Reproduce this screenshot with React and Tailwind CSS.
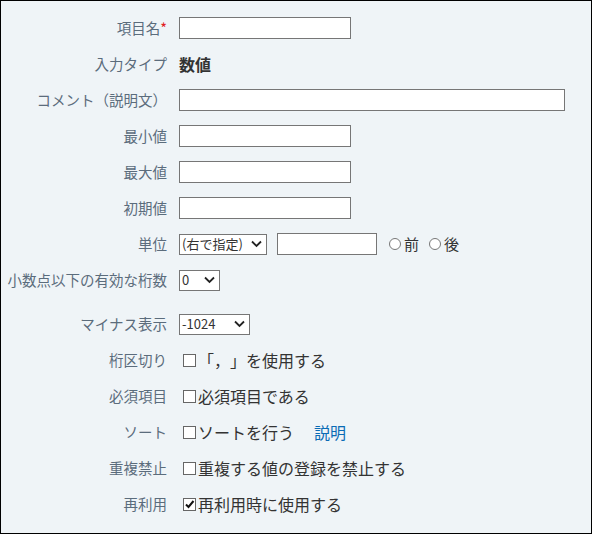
import React from 'react';

const font = { fontFamily: '"Noto Sans CJK JP", "Noto Sans", sans-serif' };

const Row = ({ label, required, className = '', children }) => (
    <div className={`flex h-9 items-center ${className}`}>
        <div className="w-[166px] shrink-0 text-right text-[14.5px] text-[#5b6c7c] whitespace-nowrap">
            {label}
            {required && <span className="text-[#e02020]">*</span>}
        </div>
        <div className="ml-3 flex items-center text-[16px] text-[#333]">{children}</div>
    </div>
);

const TextBox = ({ className = 'w-[172px]' }) => (
    <div className={`h-[22px] border border-[#767676] bg-white ${className}`} />
);

const Select = ({ value, className = '' }) => (
    <div className={`flex h-[21px] items-center justify-between border border-[#767676] bg-white pl-[2px] pr-[4px] text-[13px] text-[#333] ${className}`}>
        <span>{value}</span>
        <svg width="11" height="8" viewBox="0 0 11 8" className="shrink-0">
            <path d="M1 1.5 L5.5 6 L10 1.5" fill="none" stroke="#222" strokeWidth="1.8" />
        </svg>
    </div>
);

const Check = ({ checked }) => (
    <span className="ml-1 mr-[2px] inline-flex h-[13px] w-[13px] items-center justify-center border border-[#666] bg-white">
        {checked && (
            <svg width="11" height="11" viewBox="0 0 11 11">
                <path d="M2 5.5 L4.5 8 L9.5 2" fill="none" stroke="#111" strokeWidth="2" />
            </svg>
        )}
    </span>
);

const Radio = ({ label }) => (
    <span className="flex items-center">
        <span className="mr-[3px] inline-block h-[12px] w-[12px] rounded-full border border-[#777] bg-white" />
        {label}
    </span>
);

export default function App() {
    return (
        <div style={font} className="h-[534px] w-[592px] border border-black bg-[#eff4f7] pt-[9px] [text-spacing-trim:space-all]">
            <Row label="項目名" required>
                <TextBox />
            </Row>
            <Row label="入力タイプ">
                <span className="font-bold">数値</span>
            </Row>
            <Row label="コメント（説明文）">
                <TextBox className="w-[386px]" />
            </Row>
            <Row label="最小値">
                <TextBox />
            </Row>
            <Row label="最大値">
                <TextBox />
            </Row>
            <Row label="初期値">
                <TextBox />
            </Row>
            <Row label="単位">
                <Select value="(右で指定)" className="w-[88px]" />
                <TextBox className="ml-[10px] w-[100px]" />
                <div className="ml-3 flex items-center gap-[10px] text-[15px]">
                    <Radio label="前" />
                    <Radio label="後" />
                </div>
            </Row>
            <Row label="小数点以下の有効な桁数">
                <Select value="0" className="w-[41px]" />
            </Row>
            <Row label="マイナス表示" className="mt-2">
                <Select value="-1024" className="w-[71px]" />
            </Row>
            <Row label="桁区切り">
                <Check />
                <span>「，」を使用する</span>
            </Row>
            <Row label="必須項目">
                <Check />
                <span>必須項目である</span>
            </Row>
            <Row label="ソート">
                <Check />
                <span>ソートを行う</span>
                <a className="ml-[20px] text-[#0a6bb5]">説明</a>
            </Row>
            <Row label="重複禁止">
                <Check />
                <span>重複する値の登録を禁止する</span>
            </Row>
            <Row label="再利用">
                <Check checked />
                <span>再利用時に使用する</span>
            </Row>
        </div>
    );
}
